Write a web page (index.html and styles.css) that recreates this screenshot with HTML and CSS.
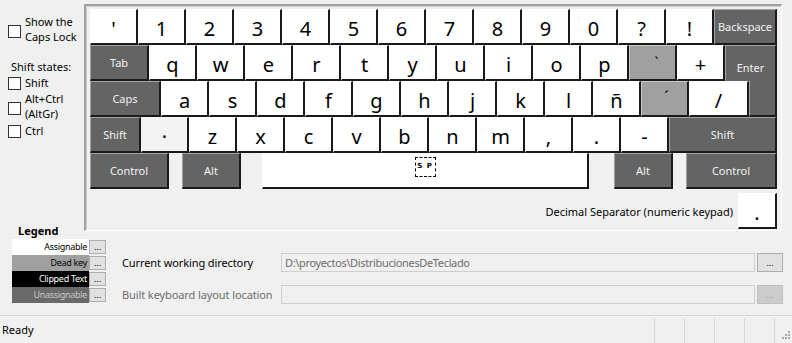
FILE: index.html
```html
<!DOCTYPE html>
<html>
<head>
<meta charset="utf-8">
<link rel="stylesheet" href="styles.css">
</head>
<body>
<div class="top">
  <div class="sidebar">
    <div class="opt opt-caps"><span class="cb"></span><span class="otext">Show the<br>Caps Lock</span></div>
    <div class="states">Shift states:</div>
    <div class="opt opt-shift"><span class="cb"></span><span class="otext">Shift</span></div>
    <div class="opt opt-altgr"><span class="cb"></span><span class="otext">Alt+Ctrl<br>(AltGr)</span></div>
    <div class="opt opt-ctrl"><span class="cb"></span><span class="otext">Ctrl</span></div>
    <div class="legend-title">Legend</div>
  </div>
  <div class="panel">
    <div class="row">
      <div class="key">'</div>
      <div class="key">1</div>
      <div class="key">2</div>
      <div class="key">3</div>
      <div class="key">4</div>
      <div class="key">5</div>
      <div class="key">6</div>
      <div class="key">7</div>
      <div class="key">8</div>
      <div class="key">9</div>
      <div class="key">0</div>
      <div class="key">?</div>
      <div class="key">!</div>
      <div class="key dk w63">Backspace</div>
    </div>
    <div class="row">
      <div class="key dk w59">Tab</div>
      <div class="key">q</div>
      <div class="key">w</div>
      <div class="key">e</div>
      <div class="key">r</div>
      <div class="key">t</div>
      <div class="key">y</div>
      <div class="key">u</div>
      <div class="key">i</div>
      <div class="key">o</div>
      <div class="key">p</div>
      <div class="key dead"><span class="grave">`</span></div>
      <div class="key">+</div>
      <div class="key dk enter">Enter</div>
    </div>
    <div class="row">
      <div class="key dk w71">Caps</div>
      <div class="key">a</div>
      <div class="key">s</div>
      <div class="key">d</div>
      <div class="key">f</div>
      <div class="key">g</div>
      <div class="key">h</div>
      <div class="key">j</div>
      <div class="key">k</div>
      <div class="key">l</div>
      <div class="key">ñ</div>
      <div class="key dead"><span class="acute">´</span></div>
      <div class="key w60">/</div>
      <div class="key dk enter-tail"></div>
    </div>
    <div class="row">
      <div class="key dk w51">Shift</div>
      <div class="key dim">·</div>
      <div class="key">z</div>
      <div class="key">x</div>
      <div class="key">c</div>
      <div class="key">v</div>
      <div class="key">b</div>
      <div class="key">n</div>
      <div class="key">m</div>
      <div class="key">,</div>
      <div class="key">.</div>
      <div class="key">-</div>
      <div class="key dk w108">Shift</div>
    </div>
    <div class="row">
      <div class="key dk w79">Control</div>
      <div class="key dk w59 gap13">Alt</div>
      <div class="key space"><span class="sp">S P</span></div>
      <div class="key dk w59 gap25">Alt</div>
      <div class="key dk w91 gap13">Control</div>
    </div>
    <div class="decimal">
      <span>Decimal Separator (numeric keypad)</span>
      <div class="key w39 deckey">.</div>
    </div>
  </div>
</div>
<div class="bottom">
  <div class="legend">
    <div class="lrow"><div class="lbox l-assign">Assignable</div><div class="lbtn">...</div></div>
    <div class="lrow"><div class="lbox l-dead">Dead key</div><div class="lbtn">...</div></div>
    <div class="lrow"><div class="lbox l-clip">Clipped Text</div><div class="lbtn">...</div></div>
    <div class="lrow"><div class="lbox l-unas">Unassignable</div><div class="lbtn">...</div></div>
  </div>
  <div class="form">
    <div class="frow">
      <div class="flabel">Current working directory</div>
      <div class="tbox">D:\proyectos\DistribucionesDeTeclado</div>
      <div class="fbtn">...</div>
    </div>
    <div class="frow">
      <div class="flabel disabled">Built keyboard layout location</div>
      <div class="tbox"></div>
      <div class="fbtn fbtn-dis">...</div>
    </div>
  </div>
</div>
<div class="status">
  <div class="ready">Ready</div>
  <div class="cell"></div>
  <div class="cell"></div>
  <div class="cell"></div>
  <div class="cell"></div>
  <div class="cell grip">
    <svg width="10" height="10" viewBox="0 0 10 10">
      <rect x="8" y="0" width="2" height="2" fill="#a8a8a8"/>
      <rect x="5" y="3" width="2" height="2" fill="#a8a8a8"/>
      <rect x="8" y="3" width="2" height="2" fill="#a8a8a8"/>
      <rect x="2" y="6" width="2" height="2" fill="#a8a8a8"/>
      <rect x="5" y="6" width="2" height="2" fill="#a8a8a8"/>
      <rect x="8" y="6" width="2" height="2" fill="#a8a8a8"/>
    </svg>
  </div>
</div>
</body>
</html>
```
FILE: styles.css
```css
html, body {
  margin: 0;
  padding: 0;
}
body {
  width: 792px;
  height: 343px;
  overflow: hidden;
  background: #f0f0f0;
  font-family: "Noto Sans", "Open Sans", sans-serif;
  font-size: 11px;
  color: #000;
}
.top {
  display: flex;
  align-items: flex-start;
  height: 238px;
}
.sidebar {
  width: 84px;
  height: 238px;
  box-sizing: border-box;
  padding-top: 14px;
  display: flex;
  flex-direction: column;
  flex: none;
}
.opt {
  display: flex;
  align-items: flex-start;
  gap: 4px;
  padding-left: 8px;
  line-height: 15px;
}
.cb {
  width: 13px;
  height: 13px;
  box-sizing: border-box;
  border: 1px solid #333;
  background: #fff;
  flex: none;
}
.opt-caps .cb { margin-top: 11px; }
.states {
  margin-top: 15px;
  padding-left: 11px;
  line-height: 15px;
}
.opt-shift { margin-top: 1px; }
.opt-shift .cb { margin-top: 2px; }
.opt-altgr { margin-top: 1px; }
.opt-altgr .cb { margin-top: 11px; }
.opt-ctrl { margin-top: 2px; }
.opt-ctrl .cb { margin-top: 2px; }
.legend-title {
  margin-top: auto;
  padding-left: 18px;
  font-weight: bold;
  line-height: 14px;
}
.panel {
  margin-top: 4px;
  width: 698px;
  height: 227px;
  box-sizing: border-box;
  border-style: solid;
  border-width: 2px 1px 1px 2px;
  border-color: #a0a0a0 #ffffff #ffffff #a0a0a0;
  box-shadow: inset 1px 1px 0 #d0d0d0;
  padding: 3px 4px 1px 4px;
  flex: none;
}
.row {
  display: flex;
  height: 36px;
}
.key {
  box-sizing: border-box;
  width: 48px;
  height: 36px;
  flex: none;
  background: #fff;
  border-style: solid;
  border-width: 1px 2px 2px 1px;
  border-color: #ffffff #1a1a1a #1a1a1a #ffffff;
  display: flex;
  align-items: center;
  justify-content: center;
  font-size: 20px;
  line-height: 1;
  padding-top: 4px;
  color: #000;
}
.key.dk {
  background: #646464;
  border-color: #a4a4a4 #1a1a1a #1a1a1a #a4a4a4;
  color: #f2f2f2;
  font-size: 11px;
  padding-top: 0;
}
.key.dead {
  background: #a0a0a0;
  border-color: #c8c8c8 #1a1a1a #1a1a1a #c8c8c8;
}
.key.dim {
  background: #f3f3f3;
  border-color: #f3f3f3 #1a1a1a #1a1a1a #f3f3f3;
}
.grave {
  font-size: 14px;
  margin-top: -4px;
  margin-left: 8px;
}
.acute {
  font-size: 16px;
  margin-top: -8px;
  margin-left: 4px;
}
.w39 { width: 39px; }
.w51 { width: 51px; }
.w59 { width: 59px; }
.w60 { width: 60px; }
.w63 { width: 63px; }
.w71 { width: 71px; }
.w79 { width: 79px; }
.w91 { width: 91px; }
.w108 { width: 108px; }
.gap13 { margin-left: 13px; }
.gap25 { margin-left: 25px; }
.key.enter {
  width: 52px;
  border-bottom: none;
  align-items: flex-start;
  padding-top: 16px;
}
.key.enter-tail {
  width: 28px;
  border-top: none;
}
.key.space {
  width: 327px;
  margin-left: 21px;
  align-items: flex-start;
  padding-top: 3px;
}
.sp {
  display: block;
  box-sizing: border-box;
  width: 21px;
  height: 20px;
  border: 1px dashed #000;
  font-size: 7px;
  font-weight: bold;
  line-height: 17px;
  text-align: center;
  letter-spacing: 1px;
  font-family: "DejaVu Sans", sans-serif;
}
.decimal {
  margin-top: 4px;
  display: flex;
  justify-content: flex-end;
  align-items: center;
  gap: 5px;
  height: 36px;
}
.deckey {
  align-items: flex-end;
  padding-bottom: 4px;
}
.bottom {
  display: flex;
  height: 77px;
}
.legend {
  margin-left: 12px;
  padding-top: 1px;
  width: 94px;
  flex: none;
}
.lrow {
  display: flex;
  align-items: center;
  height: 16px;
}
.lbox {
  width: 77px;
  height: 16px;
  box-sizing: border-box;
  text-align: right;
  padding-right: 2px;
  font-size: 9px;
  letter-spacing: -0.3px;
  line-height: 16px;
  flex: none;
}
.l-assign { background: #fff; color: #000; }
.l-dead { background: #a0a0a0; color: #000; }
.l-clip { background: #000; color: #fff; }
.l-unas { background: #696969; color: #c8c8c8; }
.lbtn {
  width: 17px;
  height: 14px;
  box-sizing: border-box;
  border: 1px solid #adadad;
  background: #e1e1e1;
  font-size: 9px;
  line-height: 12px;
  text-align: center;
  flex: none;
}
.form {
  margin-left: 16px;
  padding-top: 15px;
  display: flex;
  flex-direction: column;
  gap: 13px;
}
.frow {
  display: flex;
  align-items: center;
  height: 19px;
}
.flabel {
  width: 159px;
  flex: none;
  letter-spacing: -0.1px;
}
.flabel.disabled { color: #6d6d6d; }
.tbox {
  width: 474px;
  height: 19px;
  box-sizing: border-box;
  border: 1px solid #cfcfcf;
  background: #f0f0f0;
  color: #6d6d6d;
  padding-left: 3px;
  line-height: 17px;
  letter-spacing: -0.35px;
  flex: none;
}
.fbtn {
  margin-left: 2px;
  width: 26px;
  height: 19px;
  box-sizing: border-box;
  border: 1px solid #adadad;
  background: #e1e1e1;
  font-size: 9px;
  line-height: 17px;
  text-align: center;
  flex: none;
}
.fbtn-dis {
  background: #cccccc;
  border-color: #bfbfbf;
  color: #a0a0a0;
}
.status {
  display: flex;
  height: 28px;
  box-sizing: border-box;
  border-top: 1px solid #d7d7d7;
}
.ready {
  width: 654px;
  padding-left: 2px;
  box-sizing: border-box;
  line-height: 27px;
  flex: none;
}
.cell {
  width: 30px;
  margin-top: 2px;
  box-sizing: border-box;
  border-left: 1px solid #dadada;
  flex: none;
}
.grip {
  width: 18px;
  display: flex;
  align-items: flex-end;
  justify-content: flex-end;
  padding: 0 2px 2px 0;
}
```
